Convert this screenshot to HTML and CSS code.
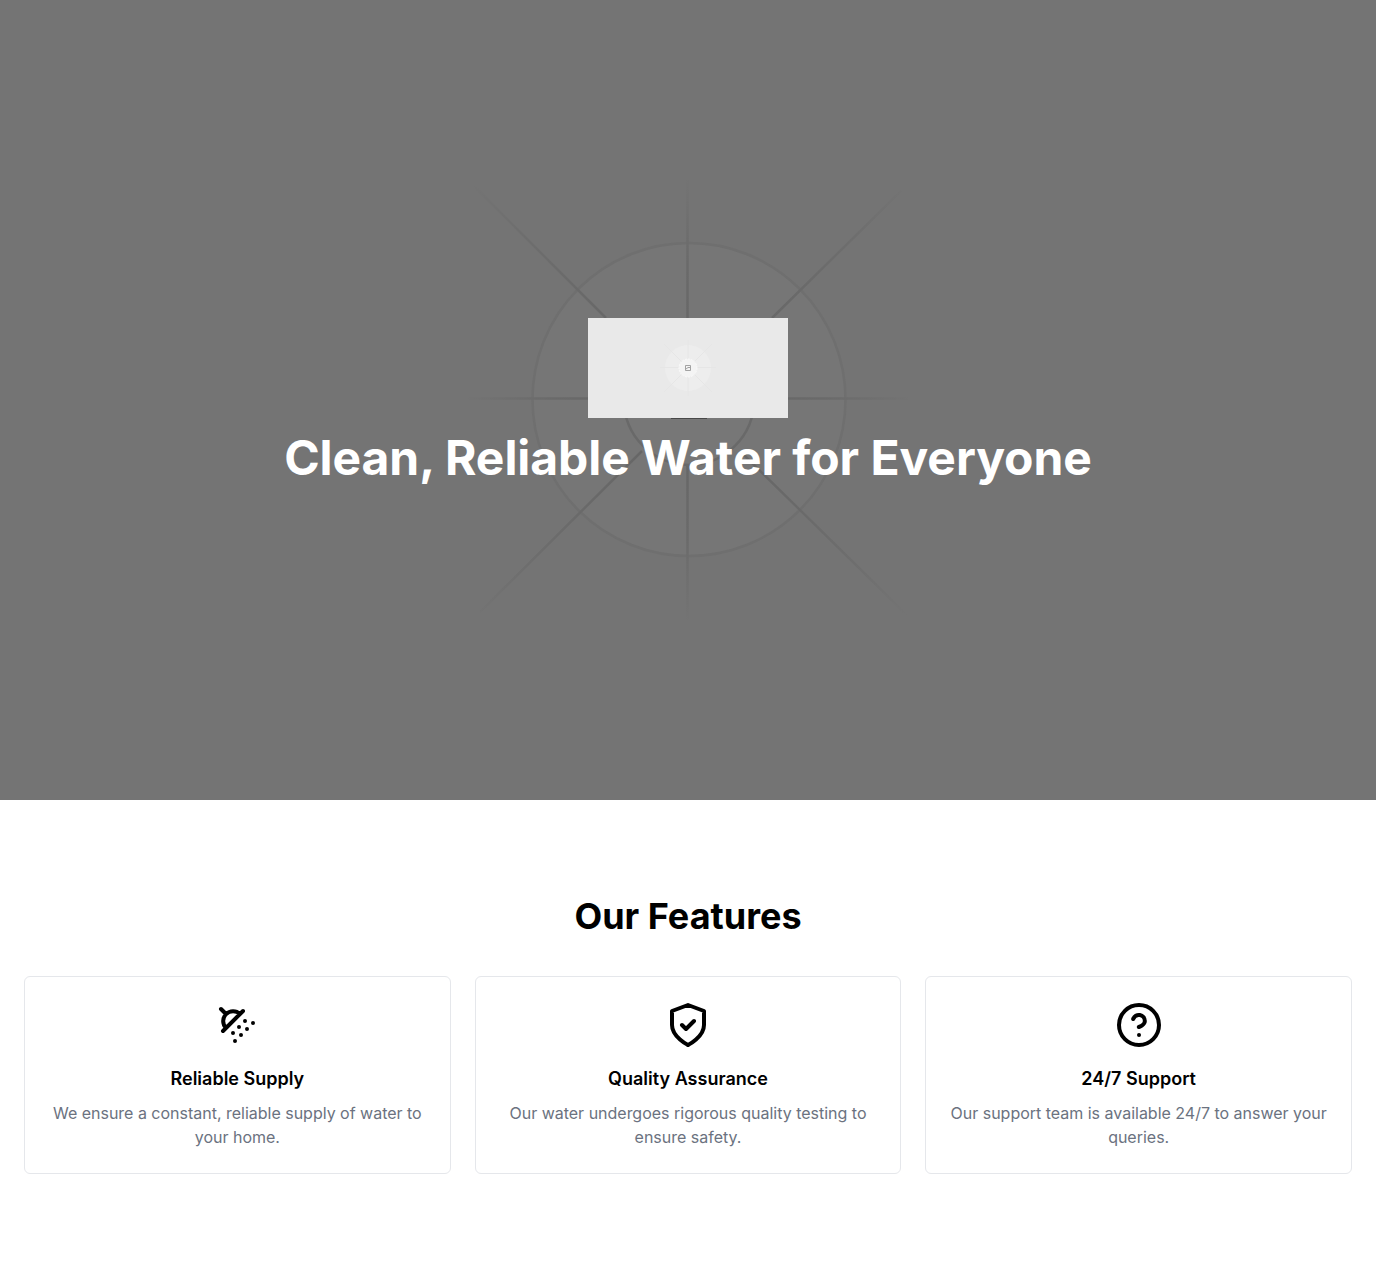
FILE: index.html
```html
<!DOCTYPE html>
<html lang="en">
<head>
<meta charset="utf-8">
<title>Clean, Reliable Water for Everyone</title>
<link rel="stylesheet" href="styles.css">
</head>
<body>
<header class="hero">
  <svg class="hero-art" viewBox="-240 -240 480 480" fill="none" aria-hidden="true">
    <defs>
      <radialGradient id="ray" gradientUnits="userSpaceOnUse" cx="0" cy="0" r="310">
        <stop offset="0" stop-color="#646464"/>
        <stop offset=".45" stop-color="#696969"/>
        <stop offset=".75" stop-color="#6e6e6e"/>
        <stop offset="1" stop-color="#747474"/>
      </radialGradient>
      <radialGradient id="ray-short" gradientUnits="userSpaceOnUse" cx="0" cy="0" r="225">
        <stop offset="0" stop-color="#646464"/>
        <stop offset=".6" stop-color="#6a6a6a"/>
        <stop offset="1" stop-color="#747474"/>
      </radialGradient>
    </defs>
    <circle cx="1" cy="-.5" r="156.500" fill="#767676" stroke="#6f6f6f" stroke-width="2.5"/>
    <path d="M-.5-220V220M-220-1.500H220" stroke="url(#ray-short)" stroke-width="2.500"/>
    <path d="M-214-214-82-82M214-210 84-82M-208 212-46 51M222 218 56 55" stroke="url(#ray)" stroke-width="2.500"/>
    <circle cx="1" r="65" fill="#777" stroke="#696969" stroke-width="2.500"/>
    <path d="M-17 18.300H19" stroke="#484848" stroke-width="1.500"/>
  </svg>
  <div class="hero-content">
    <svg class="logo" viewBox="0 0 200 100" fill="none" role="img" aria-label="Logo">
      <path fill="#e9e9e9" d="M0 0h200v100H0z"/>
      <circle cx="100" cy="50" r="23" fill="#ededed"/>
      <path d="M100 22v56M72 49.500h56M76 26l48 48M124 26 76 74" stroke="#e6e6e6"/>
      <circle cx="100" cy="50" r="9" fill="#f4f4f4" stroke="#fafafa" stroke-dasharray="2 1"/>
      <path d="M97.500 47.500h5v5h-5zM98 51l2-1.500 2 0" stroke="#999" stroke-width=".9"/>
    </svg>
    <h1 class="hero-title">Clean, Reliable Water for Everyone</h1>
  </div>
</header>
<main class="features">
  <h2 class="features-title">Our Features</h2>
  <div class="cards">
    <article class="card">
      <svg class="icon" viewBox="0 0 24 24"><path d="m4 4 2.500 2.500M13.500 6.500a4.950 4.950 0 0 0-7 7M15 5 5 15M14 17v.01M10 16v.01M13 13v.01M16 10v.01M11 20v.01M17 14v.01M20 11v.01"/></svg>
      <h3 class="card-title">Reliable Supply</h3>
      <p class="card-text">We ensure a constant, reliable supply of water to your home.</p>
    </article>
    <article class="card">
      <svg class="icon" viewBox="0 0 24 24"><path d="M12 22s8-4 8-10V5l-8-3-8 3v7c0 6 8 10 8 10M9 12l2 2 4-4"/></svg>
      <h3 class="card-title">Quality Assurance</h3>
      <p class="card-text">Our water undergoes rigorous quality testing to ensure safety.</p>
    </article>
    <article class="card">
      <svg class="icon" viewBox="0 0 24 24"><circle cx="12" cy="12" r="10"/><path d="M9.090 9a3 3 0 0 1 5.830 1c0 2-3 3-3 3M12 17h.01"/></svg>
      <h3 class="card-title">24/7 Support</h3>
      <p class="card-text">Our support team is available 24/7 to answer your queries.</p>
    </article>
  </div>
</main>
</body>
</html>
```
FILE: styles.css
```css
* { box-sizing: border-box; margin: 0; }
body { font-family: Inter, sans-serif; font-size: 16px; line-height: 24px; color: #000; background: #fff; }
.hero { position: relative; display: flex; align-items: center; justify-content: center; height: 800px; background: #747474; }
.hero-art { position: absolute; inset: 0; width: 480px; height: 480px; margin: auto; }
.hero-content { position: relative; display: flex; flex-direction: column; align-items: center; gap: 16px; }
.logo { display: block; width: 200px; height: 100px; }
.hero-title { font-size: 48px; line-height: 48px; font-weight: 700; letter-spacing: -.06px; color: #fff; white-space: nowrap; }
.features { padding: 96px 24px; }
.features-title { margin-bottom: 40px; font-size: 36px; line-height: 40px; font-weight: 700; text-align: center; }
.cards { display: grid; grid-template-columns: repeat(3, 1fr); gap: 24px; }
.card { display: flex; flex-direction: column; align-items: center; padding: 24px; border: 1px solid #e5e7eb; border-radius: 6px; text-align: center; }
.icon { width: 48px; height: 48px; margin-bottom: 16px; fill: none; stroke: #000; stroke-width: 2; stroke-linecap: round; stroke-linejoin: round; }
.card-title { margin-bottom: 8px; font-size: 18px; line-height: 28px; font-weight: 600; }
.card-text { color: #6b7280; letter-spacing: -.01px; }
```
